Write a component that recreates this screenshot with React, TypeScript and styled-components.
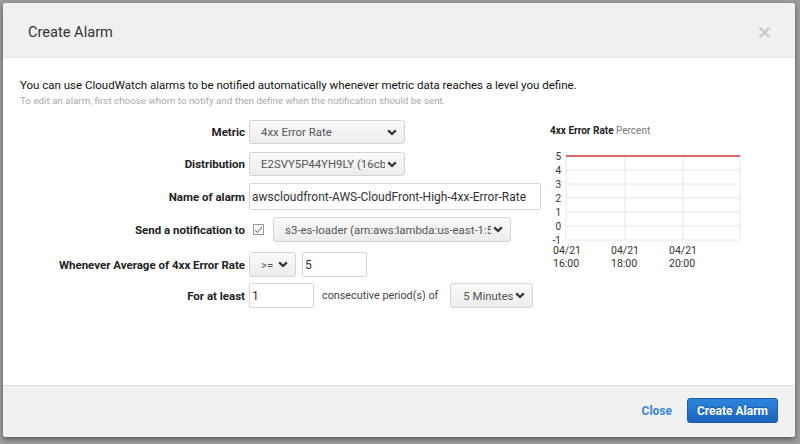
import React from "react";
import styled, { createGlobalStyle } from "styled-components";

const Global = createGlobalStyle`
  html, body { margin: 0; padding: 0; }
  body {
    background: #9c9c9c;
    font-family: Roboto, "Liberation Sans", Arial, sans-serif;
    width: 800px;
    height: 444px;
    overflow: hidden;
  }
`

const Backdrop = styled.div`
  width: 800px;
  height: 444px;
  box-sizing: border-box;
  padding: 3px 5px 7px 3px;
`

const Modal = styled.div`
  width: 792px;
  height: 434px;
  background: #fff;
  border-radius: 3px;
  box-shadow: 0 2px 5px rgba(0,0,0,0.45);
  display: flex;
  flex-direction: column;
  overflow: hidden;
`

const Header = styled.div`
  height: 55px;
  flex: none;
  box-sizing: border-box;
  background: #f0f0f0;
  border-bottom: 1px solid #e2e2e2;
  display: flex;
  align-items: center;
  justify-content: space-between;
  padding: 3px 23px 0 25px;
`

const Title = styled.div`
  font-size: 14.6px;
  color: #333;
`

const CloseX = styled.div`
  font-size: 18px;
  font-weight: bold;
  color: #c8c8c8;
  font-family: "DejaVu Sans", sans-serif;
`

const Body = styled.div`
  flex: 1;
  padding: 19px 17px 0 17px;
`

const Intro = styled.div`
  font-size: 11.5px;
  color: #111;
  line-height: 16px;
`

const Hint = styled.div`
  font-size: 9.8px;
  color: #aaa;
  line-height: 14px;
  margin-top: 1px;
`

const Content = styled.div`
  display: flex;
  margin-top: 12px;
`

const Form = styled.div`
  display: flex;
  flex-direction: column;
  width: 530px;
`

const Row = styled.div<{ h: number; mt: number }>`
  display: flex;
  align-items: center;
  height: ${p => p.h}px;
  margin-top: ${p => p.mt}px;
`

const Label = styled.div`
  width: 225px;
  flex: none;
  text-align: right;
  font-size: 11.5px;
  font-weight: bold;
  color: #222;
  margin-right: 4px;
  white-space: nowrap;
`

const Select = styled.div<{ w: number; ml?: number; pl?: number }>`
  width: ${p => p.w}px;
  height: 100%;
  box-sizing: border-box;
  margin-left: ${p => p.ml || 0}px;
  border: 1px solid #d3d3d3;
  border-radius: 3px;
  background: linear-gradient(#fafafa, #ececec);
  display: flex;
  align-items: center;
  padding: 0 7px 0 ${p => p.pl || 11}px;
  font-size: 11.4px;
  color: #555;
  overflow: hidden;
  white-space: nowrap;
  flex: none;
`

const SelectText = styled.span`
  flex: 1;
  overflow: hidden;
  margin-right: 2px;
`

const Input = styled.div<{ w: number; ml?: number }>`
  width: ${p => p.w}px;
  height: 100%;
  box-sizing: border-box;
  margin-left: ${p => p.ml || 0}px;
  border: 1px solid #d6d6d6;
  border-radius: 2px;
  background: #fff;
  display: flex;
  align-items: center;
  padding-left: 2px;
  font-size: 12px;
  color: #333;
  white-space: nowrap;
  overflow: hidden;
  flex: none;
`

const Check = styled.div`
  width: 11px;
  height: 11px;
  margin-left: 4px;
  margin-right: 9px;
  border: 1px solid #9a9a9a;
  box-sizing: border-box;
  display: flex;
  align-items: center;
  justify-content: center;
  flex: none;
`

const Plain = styled.span`
  font-size: 10.8px;
  color: #444;
  margin-left: 8px;
  white-space: nowrap;
`

const Chart = styled.div`
  width: 215px;
`

const ChartTitle = styled.div`
  height: 18px;
  line-height: 22px;
  font-size: 10px;
  color: #222;
  b { font-weight: bold; }
  span { color: #777; }
`

const Footer = styled.div`
  height: 52px;
  flex: none;
  box-sizing: border-box;
  background: #f1f1f1;
  border-top: 1px solid #dcdcdc;
  display: flex;
  align-items: center;
  justify-content: flex-end;
  padding: 0 17px 2px 0;
`

const LinkBtn = styled.div`
  color: #3b86d8;
  font-weight: bold;
  font-size: 12px;
  margin-right: 15px;
`

const PrimaryBtn = styled.div`
  width: 91px;
  height: 25px;
  box-sizing: border-box;
  border: 1px solid #1a5aa6;
  border-radius: 3px;
  background: linear-gradient(#2d85dc, #1a63bd);
  color: #fff;
  font-weight: bold;
  font-size: 12px;
  display: flex;
  align-items: center;
  justify-content: center;
  text-shadow: 0 -1px 0 rgba(0,0,0,0.3);
`

function Chevron() {
  return (
    <svg width="10" height="7" viewBox="0 0 10 7" style={{ flex: "none" }}>
      <path d="M1.2 1.4 L5 5 L8.8 1.4" fill="none" stroke="#333" strokeWidth="2.2" />
    </svg>
  )
}

function Dropdown(props: { w: number; ml?: number; pl?: number; text: string }) {
  return (
    <Select w={props.w} ml={props.ml} pl={props.pl}>
      <SelectText>{props.text}</SelectText>
      <Chevron />
    </Select>
  )
}

function RateChart() {
  const x0 = 16, x1 = 190
  const ys = [5, 4, 3, 2, 1, 0, -1]
  const top = 18
  const step = 14
  const vx = [16, 75, 133, 190]
  const font = "Roboto, sans-serif"
  return (
    <svg width="215" height="140" viewBox="0 0 215 140" style={{ display: "block" }}>
      {ys.map((v, i) => (
        <g key={v}>
          <line x1={x0} x2={x1} y1={top + i * step} y2={top + i * step} stroke="#e6e6e6" strokeWidth="1" />
          <text x={x0 - 5} y={top + i * step + 4} textAnchor="end" fontSize="10" fill="#333" fontFamily={font}>{v}</text>
        </g>
      ))}
      {vx.map(x => (
        <line key={x} x1={x} x2={x} y1={top} y2={top + 6 * step} stroke="#e6e6e6" strokeWidth="1" />
      ))}
      <line x1={x0} x2={x1} y1={top} y2={top} stroke="#d9383a" strokeWidth="1.3" />
      {["16:00", "18:00", "20:00"].map((t, i) => (
        <g key={t}>
          <text x={3 + i * 58} y={116} fontSize="10.5" fill="#333" fontFamily={font}>04/21</text>
          <text x={3 + i * 58} y={129} fontSize="10.5" fill="#333" fontFamily={font}>{t}</text>
        </g>
      ))}
    </svg>
  )
}

export default function App() {
  return (
    <Backdrop>
      <Global />
      <Modal>
        <Header>
          <Title>Create Alarm</Title>
          <CloseX>×</CloseX>
        </Header>
        <Body>
          <Intro>You can use CloudWatch alarms to be notified automatically whenever metric data reaches a level you define.</Intro>
          <Hint>To edit an alarm, first choose whom to notify and then define when the notification should be sent.</Hint>
          <Content>
            <Form>
              <Row h={24} mt={0}>
                <Label>Metric</Label>
                <Dropdown w={156} text="4xx Error Rate" />
              </Row>
              <Row h={24} mt={8}>
                <Label>Distribution</Label>
                <Dropdown w={156} text="E2SVY5P44YH9LY (16cb9d0a)" />
              </Row>
              <Row h={27} mt={7}>
                <Label>Name of alarm</Label>
                <Input w={292}>awscloudfront-AWS-CloudFront-High-4xx-Error-Rate</Input>
              </Row>
              <Row h={25} mt={7}>
                <Label>Send a notification to</Label>
                <Check>
                  <svg width="9" height="8" viewBox="0 0 9 8">
                    <path d="M1 4.2 L3.4 6.5 L8 1" fill="none" stroke="#555" strokeWidth="1" />
                  </svg>
                </Check>
                <Dropdown w={238} text="s3-es-loader (arn:aws:lambda:us-east-1:526843201877)" />
              </Row>
              <Row h={25} mt={10}>
                <Label>Whenever Average of 4xx Error Rate</Label>
                <Dropdown w={47} text=">=" />
                <Input w={65} ml={6}>5</Input>
              </Row>
              <Row h={25} mt={6}>
                <Label>For at least</Label>
                <Input w={65}>1</Input>
                <Plain>consecutive period(s) of</Plain>
                <Dropdown w={83} ml={12} pl={12} text="5 Minutes" />
              </Row>
            </Form>
            <Chart>
              <ChartTitle><b>4xx Error Rate</b> <span>Percent</span></ChartTitle>
              <RateChart />
            </Chart>
          </Content>
        </Body>
        <Footer>
          <LinkBtn>Close</LinkBtn>
          <PrimaryBtn>Create Alarm</PrimaryBtn>
        </Footer>
      </Modal>
    </Backdrop>
  )
}
